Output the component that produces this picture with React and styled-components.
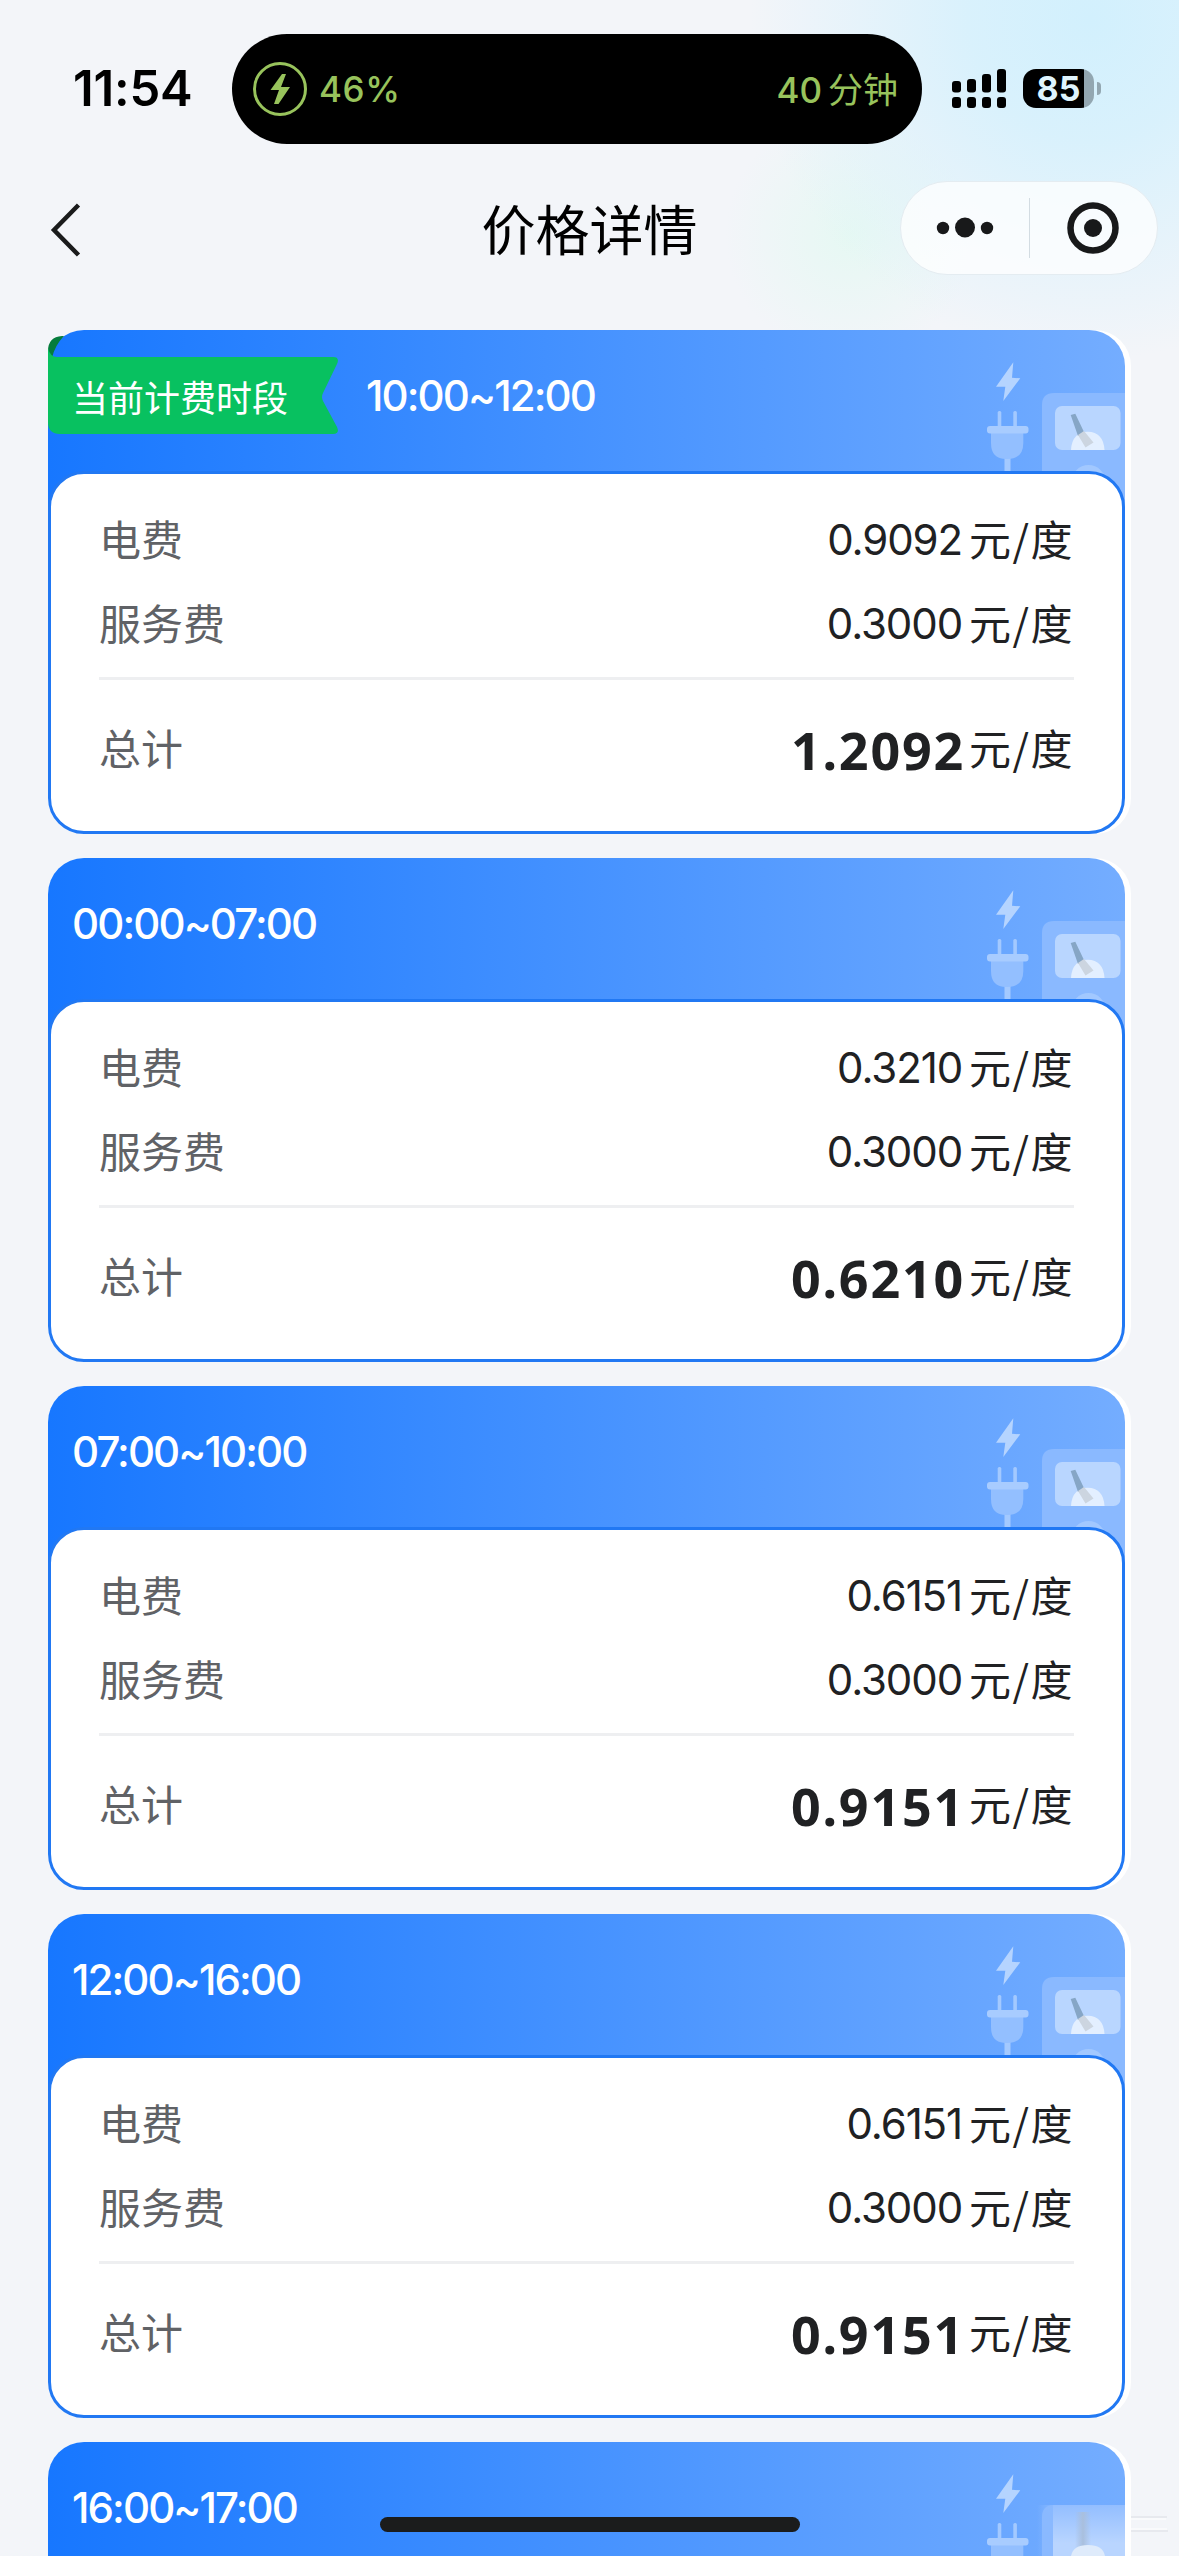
import React from "react";
import styled, { createGlobalStyle } from "styled-components";

const GlobalStyle = createGlobalStyle`
  * {
    box-sizing: border-box;
  }
  body {
    margin: 0;
    background: #f3f5f9;
    font-family: Inter, "Noto Sans CJK SC", sans-serif;
  }
`;

const Page = styled.div`
  position: relative;
  width: 1179px;
  height: 2556px;
  overflow: hidden;
  display: flex;
  flex-direction: column;
  background:
    radial-gradient(circle 340px at 1090px 20px, #d2f0fd 0%, #d2f0fdcc 35%, #d2f0fd00 100%),
    radial-gradient(circle 125px at 850px 235px, #e6f8f3 0%, #e6f8f300 100%),
    #f3f5f9;
`;

const StatusBar = styled.header`
  flex: none;
  display: flex;
  align-items: center;
  height: 110px;
  margin-top: 34px;
  padding-right: 78px;
`;

const Clock = styled.div`
  width: 232px;
  padding-left: 73px;
  font-size: 49px;
  line-height: 60px;
  font-weight: 600;
  letter-spacing: -0.2px;
  color: #000;
`;

const Island = styled.div`
  display: flex;
  align-items: center;
  width: 690px;
  height: 110px;
  padding: 0 24px 0 21px;
  border-radius: 55px;
  background: #000;
  color: #98c35c;
  font-size: 35px;
  font-weight: 500;
`;

const ChargePercent = styled.span`
  margin-left: 12px;
  letter-spacing: 0.6px;
`;

const TimeLeft = styled.span`
  display: flex;
  align-items: baseline;
  gap: 6px;
  margin: -3px 0 0 auto;
`;

const Minutes = styled.span`
  font-family: "Noto Sans CJK SC", sans-serif;
  font-weight: 400;
`;

const Signal = styled.svg`
  margin: -2px 0 0 30px;
`;

const Battery = styled.div`
  display: flex;
  align-items: center;
  justify-content: center;
  width: 71px;
  height: 39px;
  margin: -2px 0 0 17px;
  border-radius: 13px;
  background: linear-gradient(90deg, #000 61px, #93a7b1 61px);
  color: #dff4fd;
  font-size: 34px;
  font-weight: 700;
`;

const BatteryTip = styled.div`
  width: 4px;
  height: 13px;
  margin: -2px 0 0 3px;
  border-radius: 0 5px 5px 0;
  background: #93a7b1;
`;

const NavBar = styled.nav`
  flex: none;
  display: grid;
  grid-template-columns: 1fr auto 1fr;
  align-items: center;
  height: 94px;
  margin-top: 37px;
  padding: 0 21px;
`;

const BackIcon = styled.svg`
  margin: 4px 0 0 29px;
`;

const Title = styled.h1`
  margin: 0;
  padding-top: 8px;
  font-size: 54px;
  line-height: 80px;
  font-weight: 400;
  color: #000;
`;

const Capsule = styled.div`
  justify-self: end;
  display: flex;
  align-items: center;
  width: 258px;
  height: 94px;
  border-radius: 48px;
  border: 1px solid #e4ecf1;
  background: rgba(255, 255, 255, 0.75);
`;

const CapsuleButton = styled.div`
  flex: 1;
  display: flex;
  justify-content: center;
`;

const CapsuleLine = styled.div`
  width: 1px;
  height: 60px;
  background: #d3dce2;
`;

const List = styled.main`
  display: flex;
  flex-direction: column;
  gap: 24px;
  margin: 55px 48px 0;
`;

const Card = styled.section`
  flex: none;
  width: 1083px;
  height: 504px;
  padding-right: 6px;
  border-radius: 36px;
  background: #fff;
`;

const CardHead = styled.div`
  display: flex;
  height: 191px;
  border-radius: 36px 36px 0 0;
  background: linear-gradient(90deg, #1777ff 0%, #74adff 100%);
`;

const Period = styled.h2`
  margin: 0 0 0 ${({ $tagged }) => ($tagged ? 27 : 24)}px;
  padding-top: 36px;
  font-size: 42px;
  line-height: 60px;
  font-weight: 500;
  letter-spacing: -1.9px;
  color: #fff;
`;

const Ribbon = styled.div`
  position: relative;
  width: 291px;
  height: 78px;
  margin-top: 27px;
`;

const RibbonShape = styled.svg`
  position: absolute;
  left: 0;
  top: -21px;
`;

const RibbonText = styled.span`
  position: relative;
  display: block;
  padding: 16px 0 0 24px;
  font-size: 36px;
  line-height: 52px;
  color: #fff;
`;

const HeadArt = styled.svg`
  margin-left: auto;
`;

const CardBody = styled.div`
  position: relative;
  height: 363px;
  margin-top: -50px;
  padding: 35px 48px 0;
  border: 3px solid #2178f3;
  border-radius: 36px;
  background: #fff;
`;

const Row = styled.div`
  display: flex;
  align-items: center;
  justify-content: space-between;
  height: 60px;
  margin-bottom: 24px;
  font-size: 42px;
`;

const TotalRow = styled(Row)`
  margin: 38px 0 0;
`;

const Label = styled.span`
  margin-top: -4px;
  color: #606266;
`;

const Price = styled.span`
  display: flex;
  align-items: center;
  gap: 7px;
  color: #202123;
`;

const Amount = styled.span`
  letter-spacing: -1.1px;
`;

const TotalAmount = styled.span`
  margin-right: -3px;
  padding-top: 4px;
  font-family: "Noto Sans", sans-serif;
  font-size: 52px;
  line-height: 60px;
  font-weight: 700;
  letter-spacing: 1.8px;
`;

const Unit = styled.span`
  margin-top: -4px;
  font-family: "Noto Sans CJK SC", sans-serif;
  letter-spacing: 1.5px;
`;

const Divider = styled.div`
  height: 3px;
  margin-top: 1px;
  background: #eeeff1;
`;

const HomeIndicator = styled.div`
  position: absolute;
  left: 380px;
  bottom: 24px;
  width: 420px;
  height: 15px;
  border-radius: 8px;
  background: #1b1c1c;
`;

const CornerHaze = styled.svg`
  position: absolute;
  right: 0;
  bottom: 0;
`;

const periods = [
  { time: "10:00~12:00", power: "0.9092", service: "0.3000", total: "1.2092", current: true },
  { time: "00:00~07:00", power: "0.3210", service: "0.3000", total: "0.6210" },
  { time: "07:00~10:00", power: "0.6151", service: "0.3000", total: "0.9151" },
  { time: "12:00~16:00", power: "0.6151", service: "0.3000", total: "0.9151" },
  { time: "16:00~17:00" },
];

const ChargerArt = () => (
  <HeadArt width="140" height="191" viewBox="0 0 140 191">
    <path d="M28.3 32.3 27 47.7l8.3.6L18.3 71l2-14.3H11z" fill="#b5d4ff" />
    <g fill="#a3c9ff">
      <rect x="12.7" y="81" width="3.6" height="16" rx="1.5" />
      <rect x="28.3" y="81" width="3.6" height="16" rx="1.5" />
      <rect x="19.5" y="128" width="6" height="14" />
    </g>
    <path d="M6 102h32.3v11q0 16-16 16h-1q-15.3 0-15.3-16z" fill="#93bfff" />
    <rect x="2" y="96" width="41.5" height="7.5" rx="3" fill="#a8ccff" />
    <path d="M69 63h71v128H57V75q0-12 12-12z" fill="#8ab9ff" />
    <rect x="70" y="76" width="65.5" height="44" rx="7" fill="#b9d6ff" />
    <path d="M86 120q1-18 16.7-18.3Q118.5 102 119.5 120z" fill="#e3efff" />
    <path d="m85.7 85 4.6-1.2L99 102l-6 4z" fill="#86a6c6" />
    <path d="m93 105 6-4 9.5 11.5-8 5z" fill="#ccd5e0" />
    <circle cx="103.5" cy="152" r="17" fill="#a2c8ff" />
  </HeadArt>
);

const CurrentRibbon = () => (
  <Ribbon>
    <RibbonShape width="291" height="99" viewBox="0 0 291 99">
      <path d="M0 15Q0 1 14 0h2Q7 9 4 22L0 24z" fill="#057c3d" />
      <path
        d="M0 12Q2 21 9 21h276q7 0 4 7l-14 29q-2 4 0 8l14 26q3 7-4 7H12Q0 98 0 86z"
        fill="#08c160"
      />
    </RibbonShape>
    <RibbonText>当前计费时段</RibbonText>
  </Ribbon>
);

const PriceCard = ({ time, power, service, total, current }) => (
  <Card>
    <CardHead>
      {current && <CurrentRibbon />}
      <Period $tagged={current}>{time}</Period>
      <ChargerArt />
    </CardHead>
    {total && (
      <CardBody>
        <Row>
          <Label>电费</Label>
          <Price>
            <Amount>{power}</Amount>
            <Unit>元/度</Unit>
          </Price>
        </Row>
        <Row>
          <Label>服务费</Label>
          <Price>
            <Amount>{service}</Amount>
            <Unit>元/度</Unit>
          </Price>
        </Row>
        <Divider />
        <TotalRow>
          <Label>总计</Label>
          <Price>
            <TotalAmount>{total}</TotalAmount>
            <Unit>元/度</Unit>
          </Price>
        </TotalRow>
      </CardBody>
    )}
  </Card>
);

const App = () => (
  <Page>
    <GlobalStyle />
    <StatusBar>
      <Clock>11:54</Clock>
      <Island>
        <svg width="54" height="54" viewBox="0 0 54 54">
          <circle cx="27" cy="27" r="25.5" fill="none" stroke="#98c35c" strokeWidth="3" />
          <path d="M29 12h4l-5 13h9L25.5 42H21l5-14h-8.5z" fill="#98c35c" />
        </svg>
        <ChargePercent>46%</ChargePercent>
        <TimeLeft>
          <span>40</span>
          <Minutes>分钟</Minutes>
        </TimeLeft>
      </Island>
      <Signal width="54" height="39" viewBox="0 0 54 39">
        <rect x="0" y="12" width="9" height="11.5" rx="3" />
        <rect x="15" y="10" width="9" height="13.5" rx="3" />
        <rect x="30" y="5" width="9" height="18.5" rx="3" />
        <rect x="45" y="0" width="9" height="23.5" rx="3" />
        <rect x="0" y="28" width="9" height="11" rx="3" />
        <rect x="15" y="28" width="9" height="11" rx="3" />
        <rect x="30" y="28" width="9" height="11" rx="3" />
        <rect x="45" y="28" width="9" height="11" rx="3" />
      </Signal>
      <Battery>85</Battery>
      <BatteryTip />
    </StatusBar>
    <NavBar>
      <BackIcon width="32" height="58" viewBox="0 0 32 58">
        <path d="M28.5 4 4 29l24.500 25" fill="none" stroke="#1a1b1c" strokeWidth="4.5" />
      </BackIcon>
      <Title>价格详情</Title>
      <Capsule>
        <CapsuleButton>
          <svg width="58" height="22" viewBox="0 0 58 22" fill="#18191a">
            <circle cx="7" cy="11" r="6.2" />
            <circle cx="29" cy="10.5" r="10" />
            <circle cx="51" cy="11" r="6.2" />
          </svg>
        </CapsuleButton>
        <CapsuleLine />
        <CapsuleButton>
          <svg width="52" height="52" viewBox="0 0 52 52">
            <circle cx="26" cy="26" r="22.5" fill="none" stroke="#18191a" strokeWidth="6.5" />
            <circle cx="26" cy="26" r="9" fill="#18191a" />
          </svg>
        </CapsuleButton>
      </Capsule>
    </NavBar>
    <List>
      {periods.map((period) => (
        <PriceCard key={period.time} {...period} />
      ))}
    </List>
    <HomeIndicator />
    <CornerHaze width="174" height="52" viewBox="0 0 174 52">
      <defs>
        <linearGradient id="haze" x1="0" y1="0" x2="0" y2="1">
          <stop offset="0" stopColor="#93beff" />
          <stop offset="0.75" stopColor="#b9d5ff" />
        </linearGradient>
        <linearGradient id="hazeEdge" x1="0" y1="0" x2="1" y2="0">
          <stop offset="0" stopColor="#8ab9ff" stopOpacity="0" />
          <stop offset="1" stopColor="#8ab9ff" />
        </linearGradient>
        <linearGradient id="needle" x1="0" y1="0" x2="1" y2="0">
          <stop offset="0" stopColor="#a9bfdd" stopOpacity="0" />
          <stop offset="0.5" stopColor="#a9bfdd" />
          <stop offset="1" stopColor="#a9bfdd" stopOpacity="0" />
        </linearGradient>
      </defs>
      <rect x="32" y="1" width="18" height="51" fill="url(#hazeEdge)" />
      <rect x="48" y="1" width="72" height="51" fill="url(#haze)" />
      <rect x="70" y="8" width="16" height="36" fill="url(#needle)" />
      <path d="M66 52q2-11 17-11t17 11z" fill="#dfebfb" />
      <path d="M126 13h36M126 27h37" stroke="#e3e5ea" strokeWidth="1.5" />
      <path d="M126 15h35M126 25h36" stroke="#fbfcfd" strokeWidth="1.5" />
    </CornerHaze>
  </Page>
);

export default App;
